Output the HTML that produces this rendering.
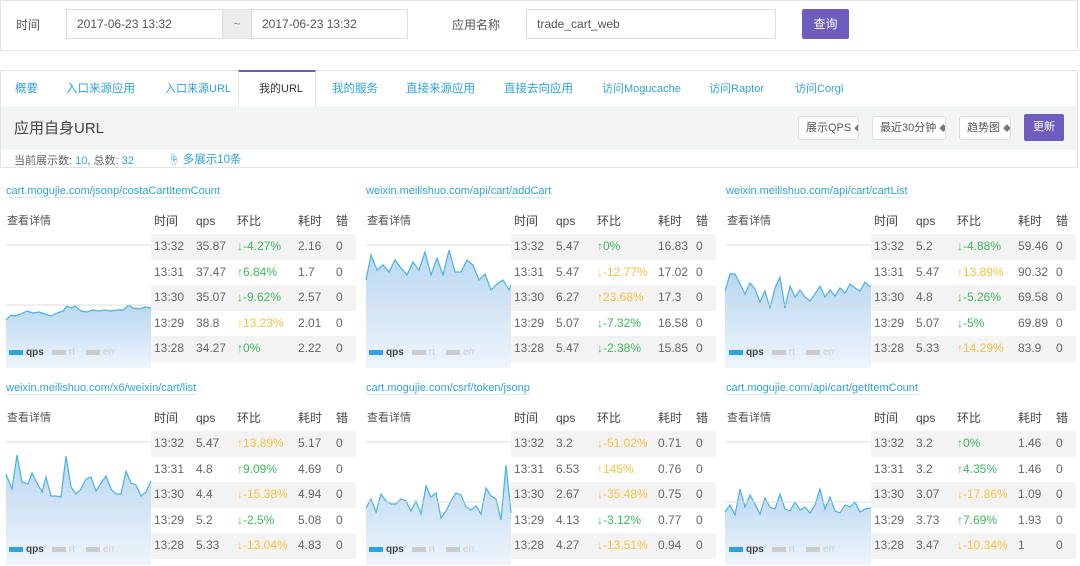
<!DOCTYPE html>
<html><head><meta charset="utf-8"><style>
*{box-sizing:border-box;margin:0;padding:0}
body{width:1080px;height:566px;background:#fff;font-family:"Liberation Sans","Noto Sans CJK SC",sans-serif;font-size:12px;color:#555;position:relative;overflow:hidden}
.a{position:absolute;white-space:nowrap}
.box{position:absolute;border:1px solid #e4e4e4;background:#fff}
.inp{position:absolute;border:1px solid #ddd;background:#fff;height:30px;line-height:28px;padding-left:10px;font-size:12px;color:#555}
.tab{position:absolute;top:80px;font-size:11.5px;color:#2fa3dc;white-space:nowrap}
.card{position:absolute;width:356px;height:188px;background:#fff}
.card .t{position:absolute;left:5px;top:5px;font-size:11px;color:#2fa3dc;border-bottom:1px solid #d9ecf6;white-space:nowrap}
.card .d{position:absolute;left:6px;top:32px;font-size:11px;color:#555}
.card svg{position:absolute;left:0;top:0}
.tb{position:absolute;left:150px;top:28px;width:205px}
.r{position:relative;height:25.5px;line-height:25.5px;font-size:12px;color:#666;white-space:nowrap}
.r span{position:absolute}
.r.h{height:26px;line-height:26px;color:#444;font-size:12px}
.r.g{background:#f3f3f3}
.c1{left:3px}.c2{left:45px}.c3{left:86px}.c4{left:147px}.c5{left:185px}
.gr{color:#3cb95b}.ye{color:#f5c242}
.lg{position:absolute;left:8px;top:167px;font-size:10px;color:#ccc;white-space:nowrap}
.lg i{display:inline-block;width:14px;height:5px;background:#2fa3dc;vertical-align:middle;margin-right:3px}
.lg b{color:#444;margin-right:8px}
.lg i.x{background:#ccc}
.sel{position:absolute;top:116px;height:24px;line-height:22px;border:1px solid #ddd;border-radius:3px;background:#fff;font-size:11px;color:#555;padding-left:7px;white-space:nowrap;overflow:hidden}
.sel s{text-decoration:none;font-size:8px;color:#777;margin-left:3px}
</style></head><body>
<div class="box" style="left:0;top:0;width:1078px;height:51px"></div>
<div class="a" style="left:16px;top:16px;font-size:12px;color:#555">时间</div>
<div class="inp" style="left:66px;top:9px;width:157px">2017-06-23 13:32</div>
<div class="a" style="left:222px;top:9px;width:30px;height:30px;background:#eceeee;border:1px solid #ddd;text-align:center;line-height:28px;color:#888">~</div>
<div class="inp" style="left:251px;top:9px;width:157px">2017-06-23 13:32</div>
<div class="a" style="left:452px;top:16px;color:#555">应用名称</div>
<div class="inp" style="left:526px;top:9px;width:250px">trade_cart_web</div>
<div class="a" style="left:802px;top:9px;width:47px;height:30px;background:#6e5cbf;color:#fff;text-align:center;line-height:30px;border-radius:2px">查询</div>

<div class="box" style="left:0;top:70px;width:1078px;height:98px"></div>
<div class="a" style="left:1px;top:106px;width:1076px;height:44px;background:#f3f4f4"></div>
<div class="a" style="left:238px;top:70px;width:78px;height:37px;background:#fff;border-top:2px solid #6e5cbf;border-left:1px solid #e4e4e4;border-right:1px solid #e4e4e4"></div>
<div class="tab" style="left:15px">概要</div>
<div class="tab" style="left:66px">入口来源应用</div>
<div class="tab" style="left:165px;font-size:11px">入口来源URL</div>
<div class="tab" style="left:259px;color:#333;font-size:11px">我的URL</div>
<div class="tab" style="left:332px">我的服务</div>
<div class="tab" style="left:406px">直接来源应用</div>
<div class="tab" style="left:504px">直接去向应用</div>
<div class="tab" style="left:602px;font-size:11px">访问Mogucache</div>
<div class="tab" style="left:709px;font-size:11px">访问Raptor</div>
<div class="tab" style="left:795px;font-size:11px">访问Corgi</div>
<div class="a" style="left:14px;top:117px;font-size:15px;color:#444">应用自身URL</div>
<div class="sel" style="left:798px;width:61px">展示QPS<s>◆</s></div>
<div class="sel" style="left:872px;width:74px">最近30分钟<s>◆</s></div>
<div class="sel" style="left:959px;width:52px">趋势图<s>◆</s></div>
<div class="a" style="left:1024px;top:114px;width:40px;height:27px;background:#6e5cbf;color:#fff;text-align:center;line-height:27px;font-size:11px;border-radius:2px">更新</div>
<div class="a" style="left:14px;top:152px;font-size:11px;color:#666">当前展示数: <span style="color:#2fa3dc">10</span>, 总数: <span style="color:#2fa3dc">32</span></div>
<div class="a" style="left:168px;top:151px;font-size:11.5px;color:#2fa3dc">☝ 多展示10条</div>

<div class="card" style="left:1px;top:180px">
<div class="t">cart.mogujie.com/jsonp/costaCartItemCount</div><div class="d">查看详情</div>
<svg width="152" height="188"><defs><linearGradient id="gf" x1="0" y1="0" x2="0" y2="1"><stop offset="0" stop-color="#b9d7f1"/><stop offset="1" stop-color="#eef5fc"/></linearGradient></defs>
<line x1="5" y1="65" x2="150" y2="65" stroke="#ddd"/>
<polygon fill="url(#gf)" points="5,140 10,135 14,136 20,134 26,131 32,133 38,132 44,134 50,136 56,133 62,131 66,126 70,128 74,126 80,131 86,132 92,130 98,131 104,130 110,131 116,130 122,130 128,125 132,128 138,129 144,127 150,128 150,188 5,188"/>
<polyline fill="none" stroke="#4ab3e0" stroke-width="1.2" points="5,140 10,135 14,136 20,134 26,131 32,133 38,132 44,134 50,136 56,133 62,131 66,126 70,128 74,126 80,131 86,132 92,130 98,131 104,130 110,131 116,130 122,130 128,125 132,128 138,129 144,127 150,128"/>
<line x1="5" y1="125" x2="150" y2="125" stroke="#ddd"/></svg>
<div class="lg"><i></i><b>qps</b><i class="x"></i>rt&nbsp;&nbsp;&nbsp;&nbsp;<i class="x"></i>err</div>
<div class="tb"><div class="r h"><span class="c1">时间</span><span class="c2">qps</span><span class="c3">环比</span><span class="c4">耗时</span><span class="c5">错</span></div>
<div class="r g"><span class="c1">13:32</span><span class="c2">35.87</span><span class="c3 gr">↓-4.27%</span><span class="c4">2.16</span><span class="c5">0</span></div>
<div class="r"><span class="c1">13:31</span><span class="c2">37.47</span><span class="c3 gr">↑6.84%</span><span class="c4">1.7</span><span class="c5">0</span></div>
<div class="r g"><span class="c1">13:30</span><span class="c2">35.07</span><span class="c3 gr">↓-9.62%</span><span class="c4">2.57</span><span class="c5">0</span></div>
<div class="r"><span class="c1">13:29</span><span class="c2">38.8</span><span class="c3 ye">↑13.23%</span><span class="c4">2.01</span><span class="c5">0</span></div>
<div class="r g"><span class="c1">13:28</span><span class="c2">34.27</span><span class="c3 gr">↑0%</span><span class="c4">2.22</span><span class="c5">0</span></div></div>
</div>

<div class="card" style="left:361px;top:180px">
<div class="t">weixin.meilishuo.com/api/cart/addCart</div><div class="d">查看详情</div>
<svg width="152" height="188"><line x1="5" y1="65" x2="150" y2="65" stroke="#ddd"/>
<polygon fill="url(#gf)" points="5,100 10,75 16,90 22,85 28,92 34,80 40,88 46,95 52,82 58,90 64,72 70,95 76,78 82,95 88,70 94,92 100,92 106,80 112,85 118,100 124,94 130,110 136,104 142,100 148,110 150,105 150,188 5,188"/>
<polyline fill="none" stroke="#4ab3e0" stroke-width="1.2" points="5,100 10,75 16,90 22,85 28,92 34,80 40,88 46,95 52,82 58,90 64,72 70,95 76,78 82,95 88,70 94,92 100,92 106,80 112,85 118,100 124,94 130,110 136,104 142,100 148,110 150,105"/>
<line x1="5" y1="125" x2="150" y2="125" stroke="#ddd"/></svg>
<div class="lg"><i></i><b>qps</b><i class="x"></i>rt&nbsp;&nbsp;&nbsp;&nbsp;<i class="x"></i>err</div>
<div class="tb"><div class="r h"><span class="c1">时间</span><span class="c2">qps</span><span class="c3">环比</span><span class="c4">耗时</span><span class="c5">错</span></div>
<div class="r g"><span class="c1">13:32</span><span class="c2">5.47</span><span class="c3 gr">↑0%</span><span class="c4">16.83</span><span class="c5">0</span></div>
<div class="r"><span class="c1">13:31</span><span class="c2">5.47</span><span class="c3 ye">↓-12.77%</span><span class="c4">17.02</span><span class="c5">0</span></div>
<div class="r g"><span class="c1">13:30</span><span class="c2">6.27</span><span class="c3 ye">↑23.68%</span><span class="c4">17.3</span><span class="c5">0</span></div>
<div class="r"><span class="c1">13:29</span><span class="c2">5.07</span><span class="c3 gr">↓-7.32%</span><span class="c4">16.58</span><span class="c5">0</span></div>
<div class="r g"><span class="c1">13:28</span><span class="c2">5.47</span><span class="c3 gr">↓-2.38%</span><span class="c4">15.85</span><span class="c5">0</span></div></div>
</div>

<div class="card" style="left:721px;top:180px">
<div class="t">weixin.meilishuo.com/api/cart/cartList</div><div class="d">查看详情</div>
<svg width="152" height="188"><line x1="5" y1="65" x2="150" y2="65" stroke="#ddd"/>
<polygon fill="url(#gf)" points="4,111 9,94 14,94 19,104 24,114 29,103 34,109 39,122 44,111 49,128 54,108 59,97 64,128 69,106 74,117 79,110 84,117 89,121 94,114 99,106 104,117 109,110 114,116 119,108 124,113 129,104 134,108 139,111 144,102 148,106 150,106 150,188 4,188"/>
<polyline fill="none" stroke="#4ab3e0" stroke-width="1.2" points="4,111 9,94 14,94 19,104 24,114 29,103 34,109 39,122 44,111 49,128 54,108 59,97 64,128 69,106 74,117 79,110 84,117 89,121 94,114 99,106 104,117 109,110 114,116 119,108 124,113 129,104 134,108 139,111 144,102 148,106 150,106"/>
<line x1="4" y1="125" x2="150" y2="125" stroke="#ddd"/></svg>
<div class="lg"><i></i><b>qps</b><i class="x"></i>rt&nbsp;&nbsp;&nbsp;&nbsp;<i class="x"></i>err</div>
<div class="tb"><div class="r h"><span class="c1">时间</span><span class="c2">qps</span><span class="c3">环比</span><span class="c4">耗时</span><span class="c5">错</span></div>
<div class="r g"><span class="c1">13:32</span><span class="c2">5.2</span><span class="c3 gr">↓-4.88%</span><span class="c4">59.46</span><span class="c5">0</span></div>
<div class="r"><span class="c1">13:31</span><span class="c2">5.47</span><span class="c3 ye">↑13.89%</span><span class="c4">90.32</span><span class="c5">0</span></div>
<div class="r g"><span class="c1">13:30</span><span class="c2">4.8</span><span class="c3 gr">↓-5.26%</span><span class="c4">69.58</span><span class="c5">0</span></div>
<div class="r"><span class="c1">13:29</span><span class="c2">5.07</span><span class="c3 gr">↓-5%</span><span class="c4">69.89</span><span class="c5">0</span></div>
<div class="r g"><span class="c1">13:28</span><span class="c2">5.33</span><span class="c3 ye">↑14.29%</span><span class="c4">83.9</span><span class="c5">0</span></div></div>
</div>

<div class="card" style="left:1px;top:377px">
<div class="t">weixin.meilishuo.com/x6/weixin/cart/list</div><div class="d">查看详情</div>
<svg width="152" height="188"><line x1="5" y1="65" x2="150" y2="65" stroke="#ddd"/>
<polygon fill="url(#gf)" points="5,97 11,112 16,78 21,105 27,107 31,96 36,106 41,115 45,100 50,119 55,119 60,120 65,79 70,110 75,117 80,112 85,102 90,100 95,114 100,106 105,99 110,112 115,117 120,117 125,94 130,106 135,108 140,119 145,115 150,104 150,188 5,188"/>
<polyline fill="none" stroke="#4ab3e0" stroke-width="1.2" points="5,97 11,112 16,78 21,105 27,107 31,96 36,106 41,115 45,100 50,119 55,119 60,120 65,79 70,110 75,117 80,112 85,102 90,100 95,114 100,106 105,99 110,112 115,117 120,117 125,94 130,106 135,108 140,119 145,115 150,104"/>
<line x1="5" y1="125" x2="150" y2="125" stroke="#ddd"/></svg>
<div class="lg"><i></i><b>qps</b><i class="x"></i>rt&nbsp;&nbsp;&nbsp;&nbsp;<i class="x"></i>err</div>
<div class="tb"><div class="r h"><span class="c1">时间</span><span class="c2">qps</span><span class="c3">环比</span><span class="c4">耗时</span><span class="c5">错</span></div>
<div class="r g"><span class="c1">13:32</span><span class="c2">5.47</span><span class="c3 ye">↑13.89%</span><span class="c4">5.17</span><span class="c5">0</span></div>
<div class="r"><span class="c1">13:31</span><span class="c2">4.8</span><span class="c3 gr">↑9.09%</span><span class="c4">4.69</span><span class="c5">0</span></div>
<div class="r g"><span class="c1">13:30</span><span class="c2">4.4</span><span class="c3 ye">↓-15.38%</span><span class="c4">4.94</span><span class="c5">0</span></div>
<div class="r"><span class="c1">13:29</span><span class="c2">5.2</span><span class="c3 gr">↓-2.5%</span><span class="c4">5.08</span><span class="c5">0</span></div>
<div class="r g"><span class="c1">13:28</span><span class="c2">5.33</span><span class="c3 ye">↓-13.04%</span><span class="c4">4.83</span><span class="c5">0</span></div></div>
</div>

<div class="card" style="left:361px;top:377px">
<div class="t">cart.mogujie.com/csrf/token/jsonp</div><div class="d">查看详情</div>
<svg width="152" height="188"><line x1="5" y1="65" x2="150" y2="65" stroke="#ddd"/>
<polygon fill="url(#gf)" points="5,131 10,122 15,135 20,117 25,124 30,127 35,127 40,122 45,124 50,134 55,124 60,137 65,109 70,120 75,116 80,141 85,134 90,124 95,116 100,118 105,130 110,133 115,129 120,137 125,111 130,119 135,122 140,143 145,88 150,136 150,188 5,188"/>
<polyline fill="none" stroke="#4ab3e0" stroke-width="1.2" points="5,131 10,122 15,135 20,117 25,124 30,127 35,127 40,122 45,124 50,134 55,124 60,137 65,109 70,120 75,116 80,141 85,134 90,124 95,116 100,118 105,130 110,133 115,129 120,137 125,111 130,119 135,122 140,143 145,88 150,136"/>
<line x1="5" y1="125" x2="150" y2="125" stroke="#ddd"/></svg>
<div class="lg"><i></i><b>qps</b><i class="x"></i>rt&nbsp;&nbsp;&nbsp;&nbsp;<i class="x"></i>err</div>
<div class="tb"><div class="r h"><span class="c1">时间</span><span class="c2">qps</span><span class="c3">环比</span><span class="c4">耗时</span><span class="c5">错</span></div>
<div class="r g"><span class="c1">13:32</span><span class="c2">3.2</span><span class="c3 ye">↓-51.02%</span><span class="c4">0.71</span><span class="c5">0</span></div>
<div class="r"><span class="c1">13:31</span><span class="c2">6.53</span><span class="c3 ye">↑145%</span><span class="c4">0.76</span><span class="c5">0</span></div>
<div class="r g"><span class="c1">13:30</span><span class="c2">2.67</span><span class="c3 ye">↓-35.48%</span><span class="c4">0.75</span><span class="c5">0</span></div>
<div class="r"><span class="c1">13:29</span><span class="c2">4.13</span><span class="c3 gr">↓-3.12%</span><span class="c4">0.77</span><span class="c5">0</span></div>
<div class="r g"><span class="c1">13:28</span><span class="c2">4.27</span><span class="c3 ye">↓-13.51%</span><span class="c4">0.94</span><span class="c5">0</span></div></div>
</div>

<div class="card" style="left:721px;top:377px">
<div class="t">cart.mogujie.com/api/cart/getItemCount</div><div class="d">查看详情</div>
<svg width="152" height="188"><line x1="5" y1="65" x2="150" y2="65" stroke="#ddd"/>
<polygon fill="url(#gf)" points="4,135 9,128 14,138 19,112 24,130 29,118 34,127 39,137 44,121 49,130 54,132 59,117 64,132 69,134 74,125 79,133 84,130 89,136 94,128 99,112 104,132 109,120 114,134 119,136 124,128 129,130 134,125 139,135 144,132 150,131 150,188 4,188"/>
<polyline fill="none" stroke="#4ab3e0" stroke-width="1.2" points="4,135 9,128 14,138 19,112 24,130 29,118 34,127 39,137 44,121 49,130 54,132 59,117 64,132 69,134 74,125 79,133 84,130 89,136 94,128 99,112 104,132 109,120 114,134 119,136 124,128 129,130 134,125 139,135 144,132 150,131"/>
<line x1="4" y1="125" x2="150" y2="125" stroke="#ddd"/></svg>
<div class="lg"><i></i><b>qps</b><i class="x"></i>rt&nbsp;&nbsp;&nbsp;&nbsp;<i class="x"></i>err</div>
<div class="tb"><div class="r h"><span class="c1">时间</span><span class="c2">qps</span><span class="c3">环比</span><span class="c4">耗时</span><span class="c5">错</span></div>
<div class="r g"><span class="c1">13:32</span><span class="c2">3.2</span><span class="c3 gr">↑0%</span><span class="c4">1.46</span><span class="c5">0</span></div>
<div class="r"><span class="c1">13:31</span><span class="c2">3.2</span><span class="c3 gr">↑4.35%</span><span class="c4">1.46</span><span class="c5">0</span></div>
<div class="r g"><span class="c1">13:30</span><span class="c2">3.07</span><span class="c3 ye">↓-17.86%</span><span class="c4">1.09</span><span class="c5">0</span></div>
<div class="r"><span class="c1">13:29</span><span class="c2">3.73</span><span class="c3 gr">↑7.69%</span><span class="c4">1.93</span><span class="c5">0</span></div>
<div class="r g"><span class="c1">13:28</span><span class="c2">3.47</span><span class="c3 ye">↓-10.34%</span><span class="c4">1</span><span class="c5">0</span></div></div>
</div>
</body></html>
